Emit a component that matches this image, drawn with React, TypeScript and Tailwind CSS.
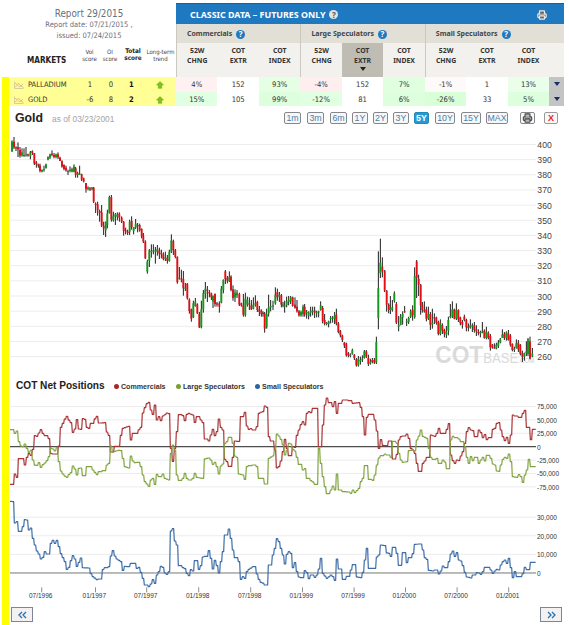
import React from "react";
import { Printer } from "lucide-react";

type Bar = [x: number, high: number, low: number, open: number, close: number];

type Market = {
  name: string;
  scores: string[];
  cells: { value: string; tone: string }[];
};

const MARKETS: Market[] = [
  {
    name: "PALLADIUM",
    scores: ["1", "0", "1"],
    cells: [
      { value: "4%", tone: "bg-[#fff1f1]" },
      { value: "152", tone: "bg-white" },
      { value: "93%", tone: "bg-[#e4ffe4]" },
      { value: "-4%", tone: "bg-[#ffeeee]" },
      { value: "152", tone: "bg-white" },
      { value: "7%", tone: "bg-[#dfffdf]" },
      { value: "-1%", tone: "bg-[#fffafa]" },
      { value: "1", tone: "bg-white" },
      { value: "13%", tone: "bg-[#e9ffe9]" }
    ]
  },
  {
    name: "GOLD",
    scores: ["-6", "8", "2"],
    cells: [
      { value: "15%", tone: "bg-[#e1ffe1]" },
      { value: "105", tone: "bg-white" },
      { value: "99%", tone: "bg-[#ddffdd]" },
      { value: "-12%", tone: "bg-[#e1ffe1]" },
      { value: "81", tone: "bg-white" },
      { value: "6%", tone: "bg-[#ddffdd]" },
      { value: "-26%", tone: "bg-[#d8ffd8]" },
      { value: "33", tone: "bg-white" },
      { value: "5%", tone: "bg-[#ddffdd]" }
    ]
  }
];

const GROUPS = ["Commercials", "Large Speculators", "Small Speculators"];

const COLUMNS = [
  ["52W", "CHNG"], ["COT", "EXTR"], ["COT", "INDEX"],
  ["52W", "CHNG"], ["COT", "EXTR"], ["COT", "INDEX"],
  ["52W", "CHNG"], ["COT", "EXTR"], ["COT", "INDEX"]
];
const SORTED_COLUMN = 4;

const RANGES = [
  { label: "1m", box: "w-[17px] mr-[6px]" },
  { label: "3m", box: "w-[17px] mr-[6px]" },
  { label: "6m", box: "w-[17px] mr-[5px]" },
  { label: "1Y", box: "w-[16px] mr-[5px]" },
  { label: "2Y", box: "w-[15px] mr-[5px]" },
  { label: "3Y", box: "w-[16px] mr-[5px]" },
  { label: "5Y", box: "w-[15px] mr-[6px]" },
  { label: "10Y", box: "w-[20px] mr-[6px]" },
  { label: "15Y", box: "w-[20px] mr-[5px]" },
  { label: "MAX", box: "w-[22px] mr-[12px]" }
];

const LEGEND = [
  { label: "Commercials", dot: "bg-[#a3282c]", box: "w-[62px]" },
  { label: "Large Speculators", dot: "bg-[#7a9f35]", box: "w-[79px]" },
  { label: "Small Speculators", dot: "bg-[#2d64a0]", box: "w-[80px]" }
];

// Chart units: three per pixel.
const BARS_1996: Bar[] = [
  [36, 46, 80, 80, 50], [42, 36, 72, 50, 67], [48, 64, 78, 67, 67], [54, 52, 96, 66, 73],
  [60, 66, 98, 75, 92], [66, 70, 95, 92, 82], [72, 70, 95, 94, 90], [78, 66, 95, 90, 88],
  [84, 86, 95, 88, 92], [91, 78, 103, 94, 82], [97, 76, 90, 78, 84], [103, 84, 120, 84, 116],
  [109, 108, 128, 112, 118], [115, 116, 128, 118, 122], [120, 116, 142, 122, 138], [126, 134, 142, 140, 134],
  [132, 122, 140, 134, 132], [138, 116, 130, 130, 118], [144, 94, 106, 104, 96], [150, 86, 102, 98, 88],
  [156, 76, 94, 86, 90], [162, 84, 100, 90, 96], [168, 86, 100, 96, 88], [174, 82, 102, 88, 97],
  [180, 95, 108, 98, 108], [186, 106, 128, 108, 125], [192, 118, 136, 120, 132], [198, 122, 140, 128, 136],
  [204, 134, 150, 140, 138], [210, 124, 142, 138, 134], [216, 128, 142, 140, 132], [222, 118, 142, 140, 124],
  [227, 126, 158, 130, 150], [233, 140, 158, 150, 144], [239, 122, 150, 148, 146], [245, 146, 168, 148, 164],
  [251, 158, 172, 160, 170], [258, 174, 203, 174, 192], [264, 184, 196, 190, 188], [270, 186, 198, 190, 190],
  [276, 186, 196, 190, 188], [281, 186, 234, 188, 230], [287, 232, 264, 236, 240], [293, 230, 272, 238, 256],
  [299, 254, 290, 258, 264], [305, 240, 306, 262, 302], [311, 290, 330, 302, 310], [317, 290, 336, 316, 290],
  [322, 254, 310, 300, 265], [328, 212, 266, 264, 216], [334, 210, 290, 216, 284], [340, 260, 290, 286, 272],
  [346, 264, 300, 275, 268], [352, 262, 286, 275, 268], [358, 262, 290, 266, 278], [365, 274, 294, 278, 290],
  [371, 288, 332, 290, 318], [377, 308, 328, 316, 320], [383, 314, 330, 320, 324], [389, 284, 330, 320, 290],
  [395, 274, 314, 288, 306], [401, 306, 328, 318, 306], [407, 282, 312, 308, 296], [413, 294, 322, 300, 302],
  [419, 296, 320, 300, 316], [425, 310, 340, 312, 334], [430, 324, 354, 332, 350], [436, 346, 402, 350, 400],
  [442, 404, 446, 440, 410], [448, 372, 426, 408, 376], [454, 358, 398, 380, 378], [460, 358, 388, 380, 376],
  [466, 366, 416, 380, 376], [472, 360, 392, 380, 372], [478, 368, 402, 376, 386], [484, 374, 400, 384, 388],
  [490, 382, 406, 388, 402], [496, 380, 408, 402, 398], [502, 390, 416, 398, 408], [508, 374, 410, 408, 380],
  [514, 328, 384, 380, 346], [520, 344, 390, 348, 376], [526, 372, 400, 376, 396], [532, 394, 476, 396, 472],
  [538, 426, 464, 460, 458], [544, 434, 472, 460, 462], [550, 438, 512, 462, 490], [556, 474, 498, 490, 488],
  [562, 474, 524, 476, 520], [568, 520, 566, 524, 558]
];

const BARS_1998: Bar[] = [
  [34, 296, 335, 298, 326], [40, 272, 324, 322, 280], [46, 264, 290, 288, 275], [52, 280, 312, 283, 310],
  [58, 306, 354, 312, 352], [64, 272, 355, 352, 298], [70, 240, 308, 298, 250], [76, 216, 266, 252, 236],
  [82, 228, 276, 238, 242], [88, 240, 262, 246, 250], [94, 248, 270, 250, 262], [99, 256, 294, 275, 258],
  [105, 250, 290, 252, 282], [111, 276, 290, 280, 284], [118, 274, 308, 280, 290], [124, 228, 280, 278, 236],
  [130, 208, 250, 240, 210], [136, 180, 222, 184, 208], [142, 198, 220, 204, 212], [148, 184, 216, 214, 200],
  [153, 196, 244, 200, 240], [159, 226, 272, 238, 264], [165, 238, 276, 262, 248], [171, 240, 264, 256, 248],
  [178, 248, 288, 252, 284], [184, 278, 290, 280, 286], [190, 252, 320, 286, 314], [196, 248, 320, 316, 266],
  [202, 260, 290, 284, 270], [208, 262, 300, 280, 284], [214, 270, 300, 286, 298], [220, 262, 298, 296, 284],
  [226, 256, 290, 284, 280], [232, 272, 306, 276, 300], [238, 288, 318, 298, 306], [244, 298, 320, 302, 312],
  [249, 304, 320, 308, 312], [254, 306, 368, 310, 356], [260, 296, 356, 352, 312], [266, 254, 320, 310, 292],
  [272, 270, 304, 292, 288], [279, 272, 300, 290, 286], [286, 232, 284, 280, 254], [292, 236, 272, 246, 262],
  [298, 246, 276, 260, 254], [304, 252, 292, 256, 284], [309, 276, 292, 286, 284], [314, 272, 308, 290, 286],
  [320, 260, 292, 286, 274], [326, 258, 286, 276, 270], [332, 258, 282, 274, 262], [338, 260, 290, 262, 288],
  [345, 262, 296, 284, 294], [351, 270, 308, 290, 304], [357, 300, 320, 304, 316], [363, 302, 320, 316, 306],
  [369, 284, 320, 312, 290], [374, 282, 320, 290, 314], [380, 300, 326, 310, 306], [386, 304, 328, 318, 308],
  [392, 290, 320, 308, 302], [398, 290, 316, 304, 302], [404, 290, 324, 302, 308], [410, 302, 322, 308, 306],
  [416, 302, 322, 306, 304], [422, 274, 302, 300, 286], [428, 288, 340, 294, 334], [434, 312, 346, 330, 342],
  [440, 336, 346, 342, 338], [446, 332, 352, 342, 334], [452, 318, 340, 326, 324], [458, 318, 338, 326, 322],
  [464, 306, 342, 326, 316], [469, 296, 346, 314, 340], [475, 336, 370, 340, 366], [481, 360, 382, 362, 376],
  [487, 374, 396, 376, 390], [493, 396, 414, 398, 406], [499, 398, 440, 400, 436], [505, 426, 442, 430, 436],
  [511, 430, 442, 436, 434], [517, 416, 434, 432, 420], [523, 432, 450, 434, 444], [529, 444, 470, 448, 466],
  [535, 438, 470, 466, 446], [541, 440, 464, 454, 450], [547, 436, 456, 448, 446], [553, 420, 446, 444, 424],
  [559, 420, 444, 424, 440], [565, 434, 468, 444, 462], [571, 446, 464, 460, 456], [577, 444, 460, 450, 456],
  [583, 444, 462, 450, 458], [589, 380, 462, 458, 396], [595, 124, 358, 324, 234]
];

const BARS_2000: Bar[] = [
  [31, 86, 204, 190, 158], [37, 142, 202, 170, 184], [44, 180, 246, 182, 242], [50, 240, 305, 242, 284],
  [56, 280, 310, 284, 300], [61, 258, 312, 300, 292], [67, 270, 305, 300, 292], [73, 244, 278, 272, 250],
  [79, 276, 342, 282, 338], [86, 318, 364, 350, 345], [92, 312, 346, 345, 320], [98, 304, 344, 322, 312],
  [104, 288, 308, 304, 304], [110, 326, 348, 338, 334], [116, 320, 342, 336, 324], [122, 298, 324, 320, 304],
  [128, 286, 332, 300, 316], [134, 172, 326, 322, 198], [140, 150, 264, 154, 204], [146, 194, 258, 206, 224],
  [152, 222, 314, 224, 286], [157, 276, 308, 284, 300], [163, 274, 308, 300, 304], [169, 290, 334, 298, 326],
  [175, 290, 330, 326, 312], [181, 306, 360, 312, 344], [187, 296, 356, 344, 338], [193, 310, 342, 322, 324],
  [199, 320, 344, 322, 338], [205, 332, 376, 336, 372], [211, 328, 376, 372, 340], [217, 340, 372, 345, 362],
  [223, 356, 382, 360, 370], [229, 348, 384, 374, 366], [235, 320, 376, 362, 330], [241, 282, 325, 320, 318],
  [247, 274, 324, 320, 298], [253, 296, 328, 298, 326], [259, 280, 330, 326, 300], [265, 298, 336, 300, 328],
  [271, 320, 346, 322, 340], [277, 330, 356, 336, 344], [283, 314, 334, 320, 330], [289, 326, 364, 330, 352],
  [295, 340, 364, 350, 354], [301, 328, 356, 352, 346], [307, 340, 366, 350, 346], [313, 336, 368, 346, 360],
  [319, 346, 378, 358, 364], [325, 358, 376, 366, 368], [331, 362, 382, 370, 366], [337, 336, 370, 368, 364],
  [343, 358, 386, 362, 384], [349, 350, 388, 384, 366], [355, 364, 388, 368, 384], [361, 372, 422, 378, 412],
  [367, 402, 416, 404, 412], [373, 400, 416, 412, 412], [379, 398, 418, 416, 404], [385, 390, 414, 408, 398],
  [391, 384, 400, 398, 386], [397, 358, 380, 384, 374], [403, 366, 390, 372, 384], [409, 364, 392, 384, 368],
  [415, 360, 392, 370, 390], [421, 372, 410, 376, 404], [427, 400, 424, 402, 420], [433, 410, 426, 420, 416],
  [439, 388, 416, 414, 400], [445, 390, 426, 398, 418], [451, 402, 436, 404, 432], [457, 422, 456, 430, 440],
  [463, 428, 452, 440, 430], [469, 394, 438, 430, 424], [474, 384, 438, 432, 388], [480, 380, 448, 394, 446],
  [487, 414, 442, 440, 430]
];

const COMMERCIALS = [
  "30,343 40,343 43,312 48,322 52,275 58,266 68,266 74,285 80,262 86,250 91,256 98,238 101,196 113,199 121,179 127,190 138,197 146,206 150,250 156,252 160,244 166,252 171,252 175,228 180,172 187,160 200,139 212,158 217,187 223,177 229,149 236,177 243,178 248,146 254,148 258,172 266,175 276,160 290,139 300,159 316,158 320,186 326,196 329,246 338,246 341,229 355,229 360,196 368,175 386,169 391,210 397,190 408,190 423,172 428,129 434,113 438,101 445,97 450,120 457,133 462,105 468,150 475,140 481,152 490,138 502,129 507,131 510,235 517,274 523,235 528,185 532,135 540,134",
  "0,134 8,137 13,152 18,133 27,130 38,135 44,157 49,140 58,140 67,158 71,205 78,207 85,213 92,195 97,178 103,197 109,185 114,147 120,172 126,180 131,235 134,268 140,275 146,289 153,289 158,262 162,213 174,214 179,140 188,140 193,127 198,168 208,178 215,176 222,180 228,170 234,130 248,125 256,108 261,112 268,200 276,213 282,240 287,297 295,290 303,273 308,245 313,208 318,235 328,257 332,257 336,230 342,232 346,212 356,180 367,155 373,165 380,130 388,125 394,128 400,115 409,115 413,140 418,230 424,230 430,165 436,105 443,84 450,98 456,110 462,95 467,162 473,130 480,100 486,90 500,90 510,92 516,100 536,98 541,112 550,140 557,195 562,142 570,133",
  "0,133 8,133 13,150 18,183 22,225 25,235 30,209 36,226 48,227 53,220 60,213 65,255 72,267 80,253 85,210 90,200 98,198 103,198 108,192 116,205 120,235 126,240 130,225 136,250 142,280 150,304 156,280 165,273 174,262 178,215 184,195 193,199 200,190 209,175 215,190 222,190 228,178 234,161 237,190 242,255 246,272 252,280 258,270 264,272 270,258 280,245 287,220 292,185 299,173 305,180 311,182 318,200 322,185 329,180 335,188 340,203 346,194 352,209 360,203 366,178 372,175 378,160 384,158 390,180 396,200 402,212 408,202 414,220 420,195 425,165 431,135 438,138 450,142 456,130 462,121 467,150 474,172 480,209 485,178 498,178"
];

const LARGE_SPECULATORS = [
  "30,179 40,179 44,190 50,183 54,215 60,228 68,230 73,222 80,235 86,247 94,241 98,270 101,285 110,286 115,278 122,292 130,284 142,272 148,260 150,235 160,237 166,243 172,232 175,275 180,303 187,312 200,322 212,308 217,288 223,297 230,315 236,295 243,294 248,317 255,317 258,290 272,290 280,300 290,314 300,305 312,302 318,285 326,280 329,228 335,228 339,246 355,241 361,242 366,265 376,290 385,294 390,258 396,273 405,278 415,277 420,290 426,315 432,335 438,342 445,349 451,330 457,325 463,343 468,313 473,312 480,320 490,312 496,325 506,330 510,250 517,225 523,240 528,315 533,329 540,331",
  "0,331 8,325 13,310 18,325 30,330 38,325 43,310 50,322 67,325 71,268 85,264 92,270 97,283 103,277 109,290 115,312 120,288 126,282 131,225 140,215 150,202 156,220 162,258 172,262 178,312 188,315 193,328 198,290 210,287 222,285 229,290 234,325 250,325 258,342 263,310 268,265 278,258 282,240 288,192 296,198 304,208 308,225 313,255 319,240 327,220 334,222 341,238 346,243 352,262 360,283 368,300 373,296 380,325 388,325 394,332 408,343 413,320 419,235 424,280 430,320 436,350 444,371 450,360 457,348 463,360 468,312 473,345 480,360 492,365 505,366 512,370 518,360 523,368 530,362 538,355 542,335 550,325 558,287 562,325 570,328",
  "0,328 6,331 12,315 18,285 23,252 28,264 36,257 47,252 54,255 61,262 65,225 72,214 79,220 85,250 92,270 100,277 110,275 117,242 128,240 133,243 138,210 144,198 150,180 154,197 165,202 173,205 178,235 184,262 192,268 200,265 210,280 217,270 224,276 234,296 238,260 242,210 248,199 258,203 268,207 276,215 285,230 290,262 297,280 304,260 310,272 318,262 328,280 334,270 340,262 346,273 354,256 360,265 366,282 372,285 378,303 384,304 390,285 397,268 402,262 408,265 414,252 420,275 428,320 440,322 448,314 455,320 461,337 466,315 472,300 478,268 484,290 498,290"
];

const SMALL_SPECULATORS = [
  "30,19 39,20 43,84 50,80 54,109 61,109 66,95 72,74 80,75 84,105 92,99 97,130 102,150 108,168 115,177 121,192 128,187 133,170 140,177 147,177 150,145 158,136 163,145 170,136 175,155 180,176 187,188 194,200 199,223 206,217 212,197 217,182 224,192 229,214 235,202 240,189 244,218 265,219 272,236 280,245 290,254 300,252 306,224 318,218 326,215 330,183 337,167 342,183 352,192 362,200 366,226 372,214 388,215 391,205 403,205 408,220 416,217 423,232 430,250 438,270 445,275 451,267 457,254 463,265 468,240 475,230 480,214 488,217 492,234 500,238 506,230 509,115 517,101 522,138 529,150 533,200 540,212",
  "0,212 8,218 13,221 18,235 24,242 30,224 37,228 41,199 48,197 54,223 62,212 70,186 78,184 85,167 91,190 97,222 103,196 110,212 115,234 121,200 127,170 131,127 138,120 145,102 151,130 157,165 162,188 170,188 175,200 180,253 186,245 192,250 200,230 205,223 222,215 228,237 234,253 245,262 258,270 263,240 270,210 278,180 283,160 289,131 295,140 300,160 306,180 313,207 318,178 325,170 332,175 337,218 343,203 348,230 355,246 366,248 372,227 378,233 383,256 396,240 402,247 412,240 416,222 420,190 426,235 432,243 443,250 452,240 458,245 463,256 468,192 473,212 480,222 485,245 492,253 504,244 512,225 522,209 527,245 541,248 548,232 553,195 558,160 563,210 570,220",
  "0,220 13,220 18,186 23,138 29,180 35,150 43,152 47,172 55,175 60,184 65,157 73,157 78,175 83,212 90,211 95,183 102,173 107,200 113,203 120,188 126,176 131,212 137,148 150,147 156,165 162,188 168,193 173,209 178,226 190,228 198,225 204,237 209,244 215,228 221,213 228,218 233,246 239,200 245,177 251,168 257,184 263,173 268,195 275,198 281,212 287,232 293,246 305,249 312,240 318,233 325,234 332,238 336,230 341,217 354,217 360,225 366,235 374,228 380,223 386,225 390,210 397,200 402,195 408,205 414,190 420,218 425,235 431,248 437,230 442,245 450,245 455,252 461,236 467,217 474,224 479,175 485,202 498,202"
];

const SEGMENT_X = [0, 540, 1110];
const WEEK = 6;

const DATES = [
  { label: "07/1996", x: 124 }, { label: "01/1997", x: 285 }, { label: "07/1997", x: 439 },
  { label: "01/1998", x: 595 }, { label: "07/1998", x: 751 }, { label: "01/1999", x: 906 },
  { label: "07/1999", x: 1061 }, { label: "01/2000", x: 1215 }, { label: "07/2000", x: 1370 },
  { label: "01/2001", x: 1525 }
];

const CHART_FONT = "'Liberation Sans', Arial, sans-serif";

// One flat step per week, joined by verticals. A turning point that falls
// inside a week sets that week's level, so peaks keep their full height.
function weeklySteps(segments: string[]): string {
  const points = segments.flatMap((segment, i) =>
    segment.split(" ").map(pair => {
      const [x, y] = pair.split(",").map(Number);
      return [x + SEGMENT_X[i], y];
    })
  );
  const end = points[points.length - 1][0];
  let path = `M${points[0][0]} ${points[0][1]}`;
  let i = 0;
  for (let x = points[0][0]; x < end; x += WEEK) {
    const middle = Math.min(x + WEEK / 2, end);
    while (i < points.length - 2 && points[i + 1][0] < middle) i++;
    const [x0, y0] = points[i];
    const [x1, y1] = points[i + 1];
    let y = x1 === x0 ? y1 : y0 + ((y1 - y0) * (middle - x0)) / (x1 - x0);
    const vertex = points.find(point => Math.abs(point[0] - middle) <= WEEK / 2);
    if (vertex) y = vertex[1];
    path += `L${x + 1} ${y.toFixed(1)}H${x + WEEK - 1}`;
  }
  return path;
}

function Candles({ bars, x, y }: { bars: Bar[]; x: number; y: number }) {
  return (
    <g transform={`translate(${x} ${y})`}>
      {bars.map(([cx, high, low, open, close]) => (
        <g key={cx}>
          <rect x={cx - 1.4} y={high} width={2.8} height={low - high} fill="#111" />
          <rect
            x={cx - 2.8}
            y={Math.min(open, close)}
            width={5.6}
            height={Math.max(3.5, Math.abs(close - open))}
            fill={close < open ? "#14961b" : "#e60c14"}
          />
        </g>
      ))}
    </g>
  );
}

function Series({ segments, color }: { segments: string[]; color: string }) {
  return <path d={weeklySteps(segments)} fill="none" stroke={color} strokeWidth={3.6} strokeLinejoin="round" />;
}

function PriceChart() {
  return (
    <svg viewBox="27 0 1680 750" className="block h-[250px] w-[560px]" fontFamily={CHART_FONT}>
      {Array.from({ length: 15 }, (_, i) => (
        <g key={i}>
          <rect x={30} y={57 + i * 45.45} width={1578} height={3} fill="#ededed" />
          <text x={1612} y={69 + i * 45.45} fontSize={26} fill="#444">{400 - i * 10}</text>
        </g>
      ))}
      <text x={1306} y={714} fill="#dadada" textLength={297} lengthAdjust="spacingAndGlyphs">
        <tspan fontSize={74} fontWeight="bold">COT</tspan>
        <tspan fontSize={43}>BASE</tspan>
        <tspan fontSize={20} fill="#cfcfcf">.COM</tspan>
      </text>
      <Candles bars={BARS_1996} x={0} y={0} />
      <Candles bars={BARS_1998} x={540} y={255} />
      <Candles bars={BARS_2000} x={1110} y={255} />
    </svg>
  );
}

function NetPositionsChart() {
  const large = ["75,000", "50,000", "25,000", "0", "-25,000", "-50,000", "-75,000"];
  const small = ["30,000", "20,000", "10,000", "0"];

  return (
    <svg viewBox="27 81 1680 624" className="block h-[208px] w-[560px]" fontFamily={CHART_FONT} fontSize={19.5} fill="#333">
      {large.map((label, i) => (
        <g key={label}>
          <rect x={30} y={108 + i * 40.2} width={1578} height={3} fill={label === "0" ? "#222" : "#ececec"} />
          <text x={1611} y={118 + i * 40.2}>{label}</text>
        </g>
      ))}
      <Series segments={COMMERCIALS} color="#aa3336" />
      <Series segments={LARGE_SPECULATORS} color="#81a440" />

      <g transform="translate(0 375)">
        {small.map((label, i) => (
          <g key={label}>
            <rect x={30} y={65 + i * 55.8} width={1578} height={3} fill={label === "0" ? "#777" : "#ececec"} />
            <text x={1611} y={75 + i * 56}>{label}</text>
          </g>
        ))}
        <Series segments={SMALL_SPECULATORS} color="#3c6da8" />
        {DATES.map(date => (
          <g key={date.label}>
            <rect x={date.x} y={277} width={2.5} height={15} fill="#777" />
            <text x={date.x - 2} y={308} textAnchor="middle">{date.label}</text>
          </g>
        ))}
      </g>
    </svg>
  );
}

function HelpBadge({ className }: { className: string }) {
  return (
    <span className={`flex h-[9px] w-[9px] items-center justify-center rounded-full text-[8px] leading-none font-bold ${className}`}>
      ?
    </span>
  );
}

function TrendUp() {
  return (
    <svg viewBox="0 0 8 8" className="h-[8px] w-[8px]">
      <path d="M4 .5 7.5 4H5.7v3.3H2.3V4H.5Z" fill="#7fc31c" stroke="#62a411" strokeWidth=".5" />
    </svg>
  );
}

function SparkIcon() {
  return (
    <svg viewBox="0 0 10 8" className="h-[8px] w-[10px]" fill="none" strokeWidth=".8">
      <path d="M.5.5v7h9" stroke="#c9c69a" />
      <path d="m1 2 2 1.5 2-1L7 5l2.5 1.5" stroke="#e7a477" />
      <path d="m1 6 2.5-1.5L6 6l3-3" stroke="#c3c291" />
    </svg>
  );
}

export default function App(): React.ReactElement {
  return (
    <div className="flex h-[625px] w-[569px] flex-col overflow-hidden bg-white font-['DejaVu_Sans_Condensed','DejaVu_Sans',sans-serif] text-[#333]">
      <header className="flex h-[77px] shrink-0">
        <div className="flex w-[176px] flex-col">
          <div className="flex h-[45px] flex-col items-center pt-[7px] pl-[2px] text-[#667080]">
            <p className="text-[9.8px] leading-[13px]">Report 29/2015</p>
            <p className="text-[7.5px] leading-[10.5px]">Report date: 07/21/2015 ,</p>
            <p className="text-[7.5px] leading-[10.5px]">issued: 07/24/2015</p>
          </div>
          <div className="flex items-center pt-px text-center text-[6px] leading-[7px] text-[#444]">
            <p className="mt-[11px] w-[80px] pl-[27px] text-left text-[8.1px] font-bold text-[#222]">MARKETS</p>
            <p className="w-[19px]">Vol<br />score</p>
            <p className="w-[22px]">OI<br />score</p>
            <p className="w-[24px] text-[6.4px] font-bold text-[#222]">Total<br />score</p>
            <p className="w-[31px] text-[6px] whitespace-nowrap">Long-term<br />trend</p>
          </div>
        </div>

        <div className="mt-[3px] w-[388px] font-['Noto_Sans',sans-serif]">
          <div className="flex h-[21px] items-center border-t border-[#175f9e] bg-[#1e79c1] pt-px pl-[14px] text-white">
            <h1 className="text-[8.9px] font-bold whitespace-nowrap">CLASSIC DATA – FUTURES ONLY</h1>
            <HelpBadge className="ml-[4px] bg-[#e6e4de] text-[#555]" />
            <Printer className="mr-[17px] ml-auto h-[10px] w-[10px] text-[#e9e9e9]" strokeWidth={3} fill="#666" />
          </div>
          <div className="flex h-[19px] bg-[#e2dfd7]">
            {GROUPS.map(group => (
              <div key={group} className="flex w-[124.4px] items-center gap-[4px] border-l border-[#cbc8c0] pt-px pl-[10px]">
                <span className="text-[7px] font-bold whitespace-nowrap text-[#444]">{group}</span>
                <HelpBadge className="bg-[#1e79c1] text-white" />
              </div>
            ))}
          </div>
          <div className="flex h-[34px] bg-[#f2f1ed]">
            {COLUMNS.map(([top, bottom], i) => (
              <div
                key={i}
                className={`flex w-[41.47px] flex-col items-center pt-[3px] text-[6.9px] leading-[9.7px] font-bold text-[#333] ${
                  i === SORTED_COLUMN ? "bg-[#bfbcb4]" : ""
                } ${i % 3 === 0 ? "border-l border-[#cbc8c0]" : ""}`}
              >
                <span>{top}</span>
                <span>{bottom}</span>
                {i === SORTED_COLUMN && <span className="mt-[2px] border-x-[3px] border-t-[4px] border-x-transparent border-t-[#222]" />}
              </div>
            ))}
          </div>
        </div>
      </header>

      <div className="flex min-h-0 flex-1 pl-[2px]">
        <div className="w-[7px] shrink-0 bg-[#ffff00]" />
        <main className="w-[560px]">
          {MARKETS.map((market, row) => (
            <div key={market.name} className={`flex w-[555px] text-[7.6px] ${row === 0 ? "h-[15px]" : "h-[14px]"}`}>
              <div className="flex w-[167px] items-center bg-[#ffff96] pt-px text-center">
                <span className="ml-[5px]"><SparkIcon /></span>
                <span className="ml-[4px] w-[53px] text-left text-[7.5px]">{market.name}</span>
                <span className="w-[18px]">{market.scores[0]}</span>
                <span className="w-[24px]">{market.scores[1]}</span>
                <span className="w-[17px] font-bold text-[#111]">{market.scores[2]}</span>
                <span className="ml-[16px]"><TrendUp /></span>
              </div>
              {market.cells.map((cell, i) => (
                <div key={i} className={`flex w-[41.47px] items-center justify-center pt-px ${cell.tone}`}>{cell.value}</div>
              ))}
              <div className="flex flex-1 items-start justify-center bg-[#c4c4c4] pt-[5px]">
                <span className="border-x-[3px] border-t-[4px] border-x-transparent border-t-[#122f66]" />
              </div>
            </div>
          ))}

          <div className="flex h-[19px] items-center pt-[5px] font-['Liberation_Sans',Arial,sans-serif]">
            <h2 className="ml-[6px] w-[37px] text-[12.3px] leading-none font-bold text-[#222]">Gold</h2>
            <span className="w-[232px] pt-[2px] text-[8.4px] leading-none text-[#a4a4a4]">as of 03/23/2001</span>
            {RANGES.map(({ label, box }) => (
              <button
                key={label}
                className={`flex h-[12px] shrink-0 items-center justify-center rounded-[2px] border text-[8.8px] leading-none ${box} ${
                  label === "5Y"
                    ? "border-[#2587b8] bg-[#259bd6] font-bold text-white"
                    : "border-[#85878c] bg-[#f7f7f7] text-[#4d7eac]"
                }`}
              >
                {label}
              </button>
            ))}
            <button className="mr-[9px] flex h-[12px] w-[15px] shrink-0 items-center justify-center rounded-[2px] border border-[#85878c] bg-[#f7f7f7]">
              <Printer className="h-[10px] w-[11px] text-[#444]" strokeWidth={2.6} fill="#bbb" />
            </button>
            <button className="flex h-[12px] w-[14px] shrink-0 items-center justify-center rounded-[2px] border border-[#999] bg-[#f7f7f7] text-[9px] leading-none font-bold text-[#f02011]">
              X
            </button>
          </div>

          <PriceChart />

          <div className="flex h-[22px] items-center font-['Liberation_Sans',Arial,sans-serif] font-bold">
            <h2 className="ml-[7px] w-[98px] text-[10.1px] whitespace-nowrap text-[#222]">COT Net Positions</h2>
            {LEGEND.map(({ label, dot, box }) => (
              <span key={label} className={`mt-[2px] flex items-center gap-[2px] text-[7.1px] whitespace-nowrap text-[#333] ${box}`}>
                <i className={`h-[5px] w-[5px] rounded-full ${dot}`} />
                {label}
              </span>
            ))}
          </div>

          <NetPositionsChart />

          <div className="flex justify-between pt-[2px] pr-[7px] pl-[2px]">
            {["M7 1 4 4l3 3M11 1 8 4l3 3", "m4 1 3 3-3 3M8 1l3 3-3 3"].map(d => (
              <button key={d} className="flex h-[15px] w-[22px] items-center justify-center border border-[#7c8698] bg-[#f3f2f0]">
                <svg viewBox="0 0 15 8" className="h-[8px] w-[15px]" fill="none" stroke="#2770b5" strokeWidth="1.3">
                  <path d={d} />
                </svg>
              </button>
            ))}
          </div>
        </main>
      </div>
    </div>
  );
}
